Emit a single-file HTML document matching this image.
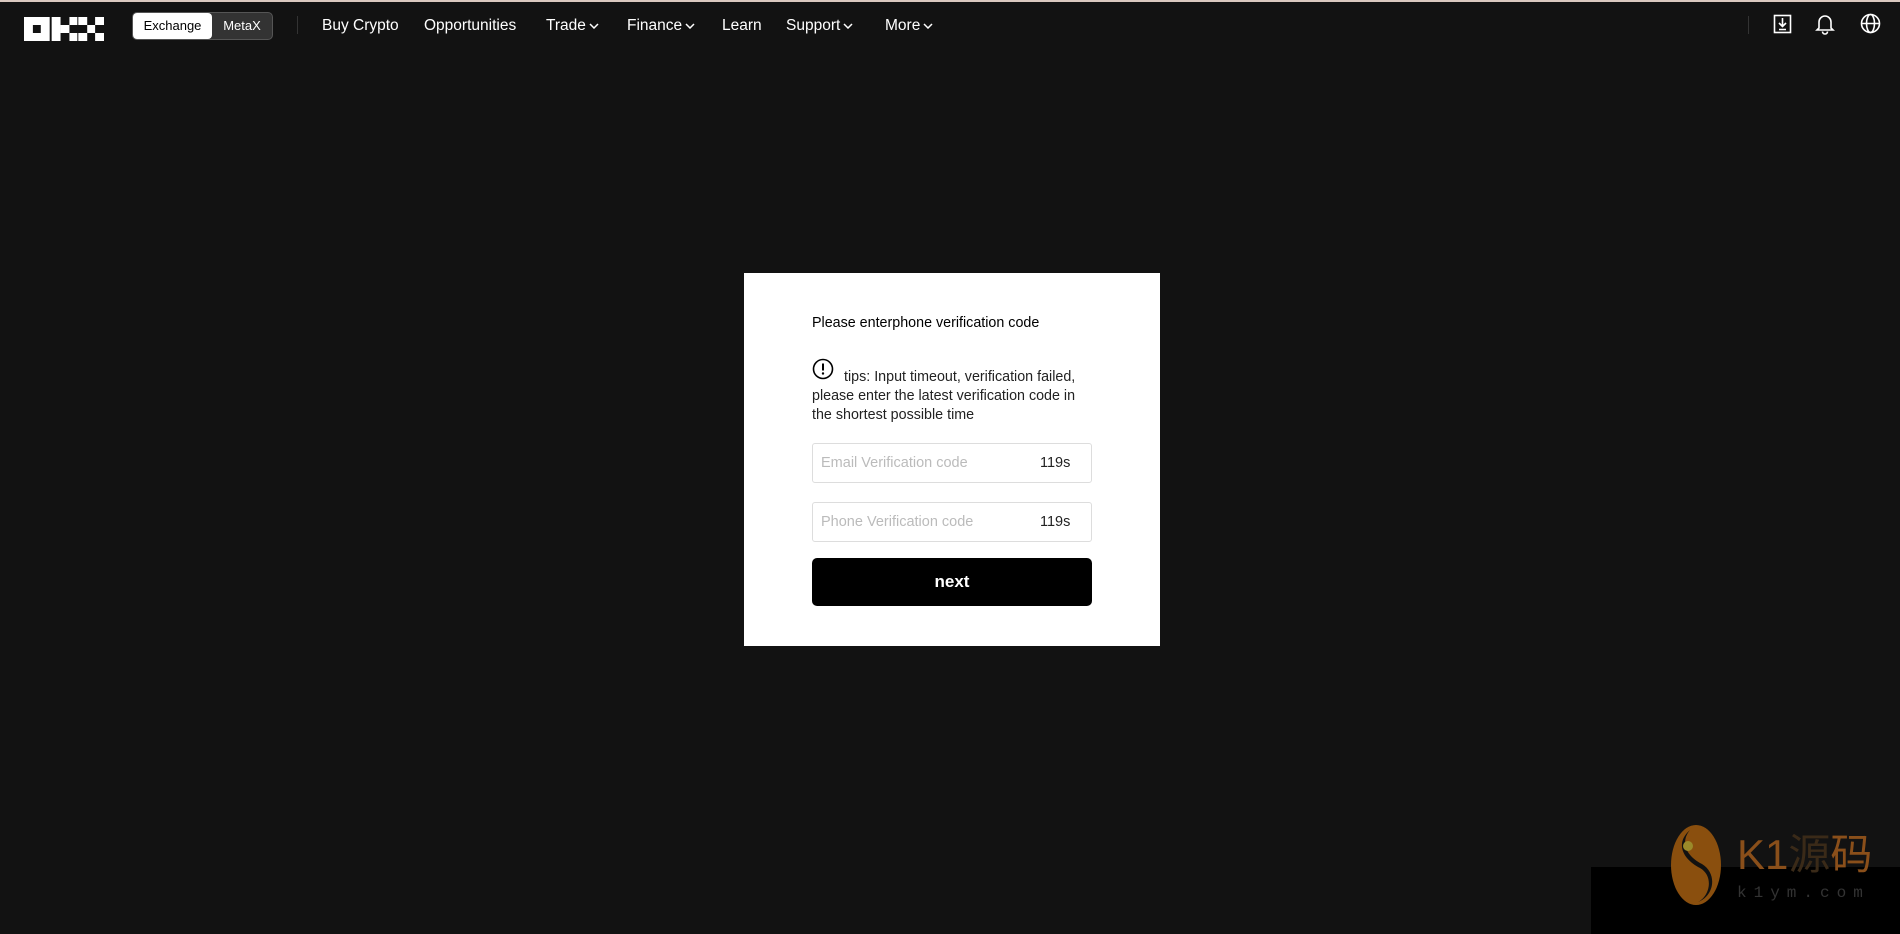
<!DOCTYPE html>
<html><head><meta charset="utf-8"><style>
*{margin:0;padding:0;box-sizing:border-box}
body{width:1900px;height:934px;background:#121212;font-family:"Liberation Sans",sans-serif;position:relative;overflow:hidden}
.topline{position:absolute;left:0;top:0;width:1900px;height:2px;background:#d9c8bf}
.nav{position:absolute;top:0;left:0;width:1900px;height:52px}
.pill{position:absolute;left:132px;top:12px;width:141px;height:28px;border:1px solid #555;border-radius:5px;background:#333;}
.pill .ex{position:absolute;left:0;top:0;width:79px;height:26px;background:#fff;border-radius:4px;color:#000;font-size:13px;line-height:26px;text-align:center}
.pill .mx{position:absolute;left:79px;top:0;width:60px;height:26px;color:#fff;font-size:13px;line-height:26px;text-align:center}
.sep{position:absolute;top:16px;width:1px;height:18px;background:#333}
.nl{position:absolute;top:16px;color:#fff;font-size:15.5px;line-height:20px;white-space:nowrap}
.nl svg{vertical-align:middle;margin-left:3px}
.card{position:absolute;left:744px;top:273px;width:416px;height:373px;background:#fff}
.t{position:absolute;left:68px;color:#000;font-size:14.3px;white-space:nowrap}
.inp{position:absolute;left:68px;width:280px;height:40px;border:1px solid #ddd;border-radius:3px}
.inp span{position:absolute;left:8px;top:11px;font-size:14.5px;color:#bbb}
.inp b{position:absolute;left:227px;top:11px;font-size:14.5px;color:#222;font-weight:normal}
.btn{position:absolute;left:68px;top:285px;width:280px;height:48px;background:#000;border-radius:5px;color:#fff;font-weight:bold;font-size:17px;text-align:center;line-height:48px}
</style></head><body>
<div class="topline"></div>
<div class="nav">
<svg style="position:absolute;left:24px;top:17px" width="80" height="24" viewBox="0 0 81 24" fill="#fff" preserveAspectRatio="none">
<path d="M0 0h26v24H0zM9 8v8h8V8z" fill-rule="evenodd"/>
<rect x="28" y="0" width="9" height="24"/><rect x="37" y="8" width="9" height="8"/><rect x="46" y="0" width="8" height="8"/><rect x="46" y="16" width="8" height="8"/>
<rect x="55" y="0" width="9" height="8"/><rect x="55" y="16" width="9" height="8"/><rect x="64" y="8" width="8" height="8"/><rect x="72" y="0" width="9" height="8"/><rect x="72" y="16" width="9" height="8"/>
</svg>
<div class="pill"><div class="ex">Exchange</div><div class="mx">MetaX</div></div>
<div class="sep" style="left:297px"></div>
<div class="nl" style="left:322px">Buy Crypto</div>
<div class="nl" style="left:424px">Opportunities</div>
<div class="nl" style="left:546px">Trade<svg width="10" height="6"><path d="M1 1l4 4 4-4" stroke="#fff" stroke-width="1.5" fill="none"/></svg></div>
<div class="nl" style="left:627px">Finance<svg width="10" height="6"><path d="M1 1l4 4 4-4" stroke="#fff" stroke-width="1.5" fill="none"/></svg></div>
<div class="nl" style="left:722px">Learn</div>
<div class="nl" style="left:786px">Support<svg width="10" height="6"><path d="M1 1l4 4 4-4" stroke="#fff" stroke-width="1.5" fill="none"/></svg></div>
<div class="nl" style="left:885px">More<svg width="10" height="6"><path d="M1 1l4 4 4-4" stroke="#fff" stroke-width="1.5" fill="none"/></svg></div>
<div class="sep" style="left:1748px"></div>
<svg style="position:absolute;left:1773px;top:14px" width="20" height="20" viewBox="0 0 20 20" fill="none" stroke="#fff" stroke-width="1.6"><rect x="1.5" y="1.5" width="16" height="17"/><path d="M9.5 4v8M6 9l3.5 3.5L13 9M6 15.5h7"/></svg>
<svg style="position:absolute;left:1815px;top:13px" width="20" height="22" viewBox="0 0 20 22" fill="none" stroke="#fff" stroke-width="1.6"><path d="M4 15V9a6 6 0 0112 0v6l2 2H2z"/><path d="M7.5 18.5a2.5 2.5 0 005 0"/></svg>
<svg style="position:absolute;left:1860px;top:13px" width="21" height="21" viewBox="0 0 21 21" fill="none" stroke="#fff" stroke-width="1.6"><circle cx="10.5" cy="10.5" r="9"/><ellipse cx="10.5" cy="10.5" rx="4" ry="9"/><path d="M1.5 10.5h18"/></svg>
</div>
<div class="card">
<div class="t" style="top:42px">Please enterphone verification code</div>
<svg style="position:absolute;left:68px;top:85px" width="22" height="22" viewBox="0 0 22 22"><circle cx="11" cy="11" r="9.5" fill="none" stroke="#000" stroke-width="1.6"/><path d="M11 5.5v7" stroke="#000" stroke-width="2"/><circle cx="11" cy="15.5" r="1.2"/></svg>
<div class="t" style="top:96px;left:100px;color:#222">tips: Input timeout, verification failed,</div>
<div class="t" style="top:115px;color:#222">please enter the latest verification code in</div>
<div class="t" style="top:134px;color:#222">the shortest possible time</div>
<div class="inp" style="top:170px"><span>Email Verification code</span><b>119s</b></div>
<div class="inp" style="top:229px"><span>Phone Verification code</span><b>119s</b></div>
<div class="btn">next</div>
</div>
<div style="position:absolute;left:1591px;top:867px;width:309px;height:67px;background:#000"></div>
<svg style="position:absolute;left:1670px;top:824px" width="52" height="82" viewBox="0 0 52 82"><ellipse cx="26" cy="41" rx="25" ry="40" fill="#8a4f0e"/><path d="M20 6C4 20 14 36 30 44c14 8 10 28-2 34 16-6 20-28 4-38C16 32 10 18 20 6z" fill="#111"/><circle cx="18" cy="22" r="5" fill="#9a8a2a"/></svg>
<div style="position:absolute;left:1737px;top:830px;font-size:42px;color:#8a4f1a;font-family:'Liberation Sans','Noto Sans CJK SC',sans-serif;line-height:50px;white-space:nowrap">K1<span style="color:#3a2a18">源</span>码</div>
<div style="position:absolute;left:1737px;top:884px;font-size:16px;color:#333;letter-spacing:7px;font-family:'Liberation Mono',monospace;white-space:nowrap">k1ym.com</div>
</body></html>
